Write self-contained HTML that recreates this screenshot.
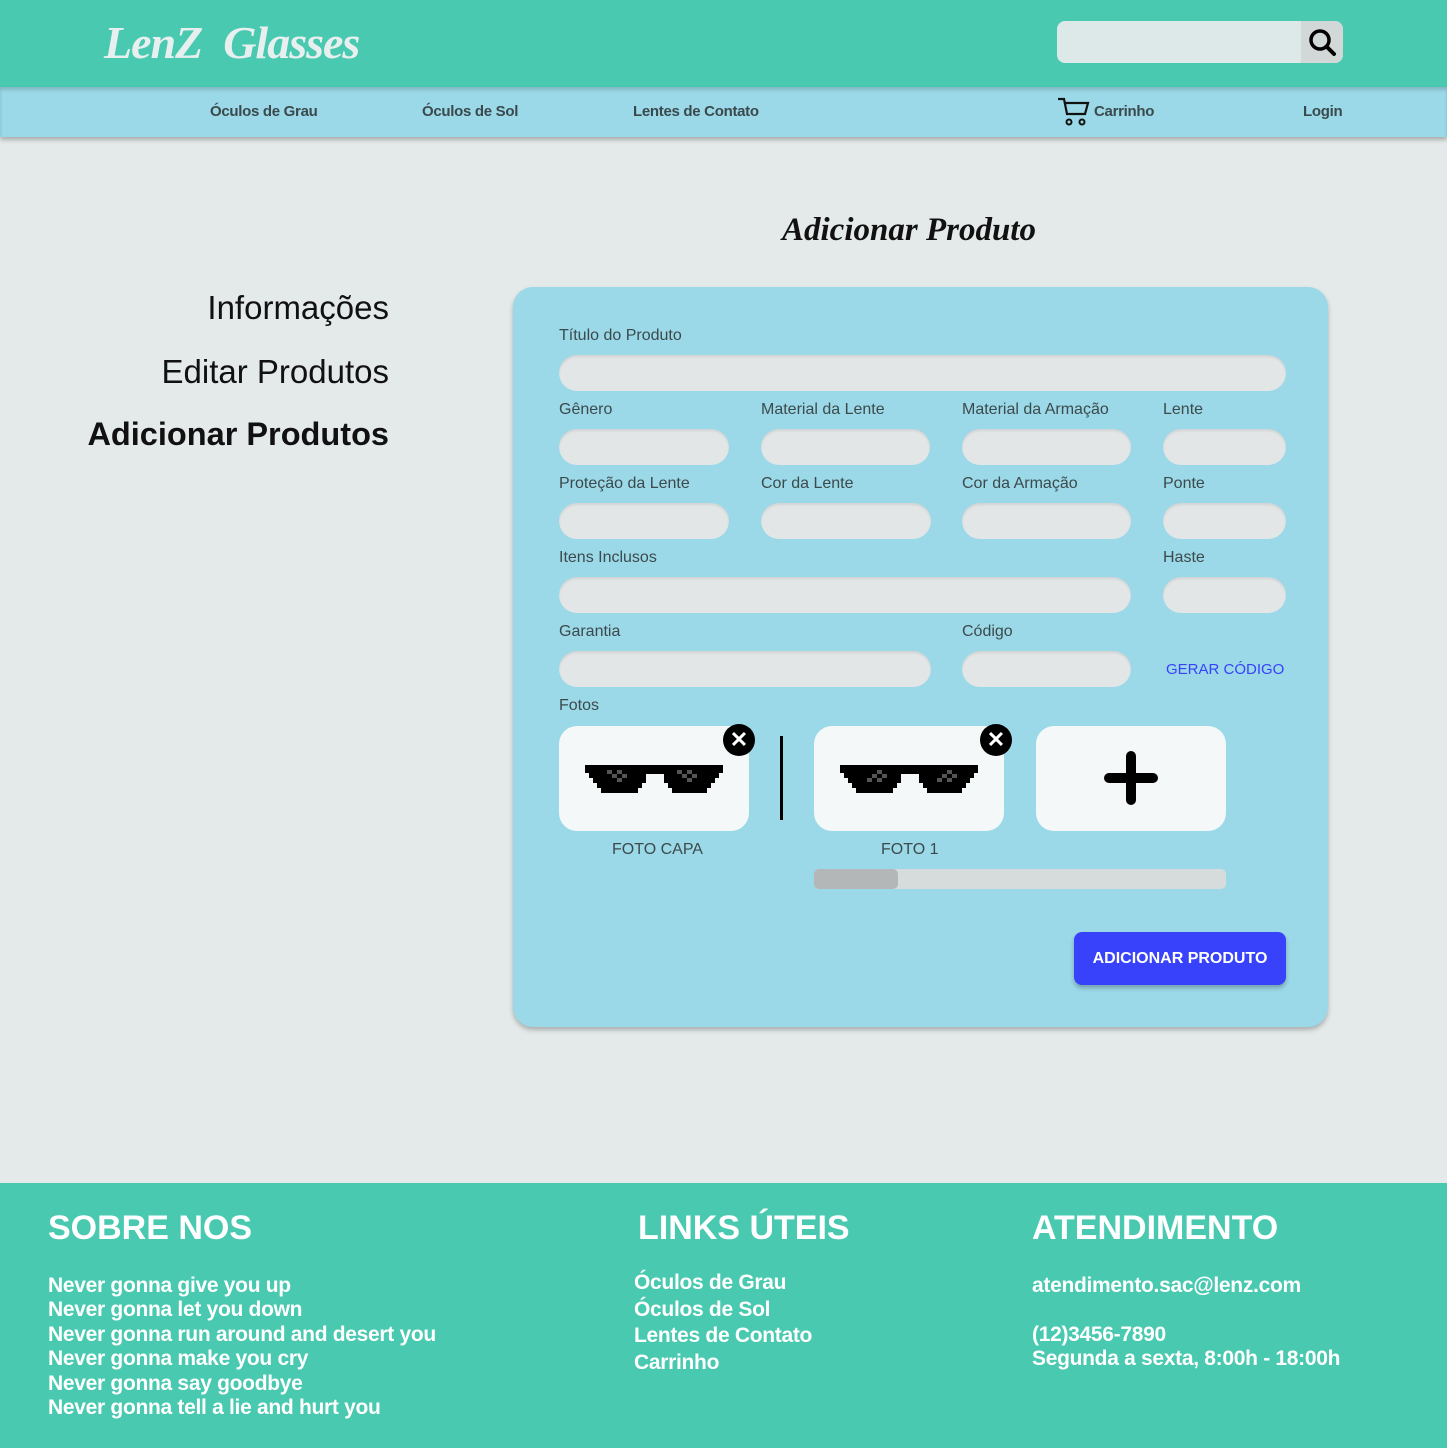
<!DOCTYPE html>
<html><head><meta charset="utf-8"><style>
*{margin:0;padding:0;box-sizing:border-box}
body{width:1447px;height:1448px;background:#e4e9ea;font-family:"Liberation Sans",sans-serif;position:relative;overflow:hidden}
.a{position:absolute;white-space:nowrap}
#hdr{left:0;top:0;width:1447px;height:87px;background:#48c9b0}
#nav{left:0;top:87px;width:1447px;height:50px;background:#9bd8e8;box-shadow:0 3px 4px rgba(0,0,0,.25),inset 0 3px 3px rgba(0,0,0,.15)}
.nl{font-weight:bold;font-size:15px;color:#3a4a4c;top:103px;letter-spacing:-.3px}
.logo{left:104px;top:16px;font-family:"Liberation Serif",serif;font-style:italic;font-weight:bold;font-size:46px;color:#e8efef;letter-spacing:-1px}
.srch{left:1057px;top:21px;width:286px;height:42px;background:#dde8e8;border-radius:8px;overflow:hidden}
.srch div{position:absolute;right:0;top:0;width:42px;height:42px;background:#d2d8d8}
.menu{right:1058px;font-size:33px;color:#111;text-align:right}
#panel{left:513px;top:287px;width:815px;height:740px;background:#9bd8e8;border-radius:20px;box-shadow:0 3px 5px rgba(0,0,0,.25)}
.lb{font-size:16px;color:#3c4a4c}
.in{height:36px;background:#e2e6e6;border-radius:18px;box-shadow:inset 0 2px 2px rgba(0,0,0,.08)}
.ph{width:190px;height:105px;background:#f4f8f9;border-radius:18px}
.x{width:32px;height:32px;border-radius:50%;background:#000;color:#fff;font-weight:bold;font-size:22px;text-align:center;line-height:32px}
#ft{left:0;top:1183px;width:1447px;height:265px;background:#48c9b0;color:#fff}
.fh{font-weight:bold;font-size:34px;top:1209px;color:#fff}
.fl{font-weight:bold;font-size:21px;color:#fff;line-height:24.4px;letter-spacing:-.3px}
</style></head><body>
<div class="a" id="hdr"></div>
<div class="a logo">LenZ&nbsp; Glasses</div>
<div class="a srch"><div><svg width="42" height="42" viewBox="0 0 42 42"><circle cx="19" cy="19" r="9" fill="none" stroke="#000" stroke-width="3.5"/><line x1="25.5" y1="25.5" x2="33" y2="33" stroke="#000" stroke-width="4" stroke-linecap="round"/></svg></div></div>
<div class="a" id="nav"></div>
<div class="a nl" style="left:210px">Óculos de Grau</div>
<div class="a nl" style="left:422px">Óculos de Sol</div>
<div class="a nl" style="left:633px">Lentes de Contato</div>
<svg class="a" style="left:1056px;top:97px" width="34" height="30" viewBox="0 0 34 30"><path d="M2 2h6l3 15h18l3-11H9" fill="none" stroke="#111" stroke-width="2.2"/><circle cx="13" cy="25" r="2.5" fill="none" stroke="#111" stroke-width="2"/><circle cx="26" cy="25" r="2.5" fill="none" stroke="#111" stroke-width="2"/></svg>
<div class="a nl" style="left:1094px">Carrinho</div>
<div class="a nl" style="left:1303px">Login</div>

<div class="a" style="left:782px;top:212px;font-family:'Liberation Serif',serif;font-style:italic;font-weight:bold;font-size:33px;color:#111">Adicionar Produto</div>
<div class="a menu" style="top:289px">Informações</div>
<div class="a menu" style="top:353px">Editar Produtos</div>
<div class="a menu" style="top:416px;font-weight:bold;font-size:32.5px">Adicionar Produtos</div>

<div class="a" id="panel"></div>
<div class="a lb" style="left:559px;top:327px">Título do Produto</div>
<div class="a in" style="left:559px;top:355px;width:727px"></div>

<div class="a lb" style="left:559px;top:401px">Gênero</div>
<div class="a lb" style="left:761px;top:401px">Material da Lente</div>
<div class="a lb" style="left:962px;top:401px">Material da Armação</div>
<div class="a lb" style="left:1163px;top:401px">Lente</div>
<div class="a in" style="left:559px;top:429px;width:170px"></div>
<div class="a in" style="left:761px;top:429px;width:169px"></div>
<div class="a in" style="left:962px;top:429px;width:169px"></div>
<div class="a in" style="left:1163px;top:429px;width:123px"></div>

<div class="a lb" style="left:559px;top:475px">Proteção da Lente</div>
<div class="a lb" style="left:761px;top:475px">Cor da Lente</div>
<div class="a lb" style="left:962px;top:475px">Cor da Armação</div>
<div class="a lb" style="left:1163px;top:475px">Ponte</div>
<div class="a in" style="left:559px;top:503px;width:170px"></div>
<div class="a in" style="left:761px;top:503px;width:170px"></div>
<div class="a in" style="left:962px;top:503px;width:169px"></div>
<div class="a in" style="left:1163px;top:503px;width:123px"></div>

<div class="a lb" style="left:559px;top:549px">Itens Inclusos</div>
<div class="a lb" style="left:1163px;top:549px">Haste</div>
<div class="a in" style="left:559px;top:577px;width:572px"></div>
<div class="a in" style="left:1163px;top:577px;width:123px"></div>

<div class="a lb" style="left:559px;top:623px">Garantia</div>
<div class="a lb" style="left:962px;top:623px">Código</div>
<div class="a in" style="left:559px;top:651px;width:372px"></div>
<div class="a in" style="left:962px;top:651px;width:169px"></div>
<div class="a" style="left:1166px;top:661px;font-size:15px;color:#3742fa">GERAR CÓDIGO</div>

<div class="a lb" style="left:559px;top:697px">Fotos</div>
<div class="a ph" style="left:559px;top:726px"></div>
<div class="a ph" style="left:814px;top:726px"></div>
<div class="a ph" style="left:1036px;top:726px"></div>
<div class="a" style="left:780px;top:736px;width:3px;height:84px;background:#000"></div>
<svg class="a" style="left:585px;top:765px" width="138" height="28" viewBox="0 0 138 28"><path d="M0 0h138v8h-4v5h-4v5h-4v5h-4v5H87v-5h-4v-5h-4V9h-18v9h-4v5h-4v5H16v-5h-4v-5H8v-5H4V8H0z" fill="#000"/><g fill="#555"><rect x="22" y="5" width="5" height="4"/><rect x="32" y="5" width="5" height="4"/><rect x="27" y="9" width="5" height="4"/><rect x="37" y="9" width="5" height="4"/><rect x="32" y="13" width="5" height="4"/><rect x="92" y="5" width="5" height="4"/><rect x="102" y="5" width="5" height="4"/><rect x="97" y="9" width="5" height="4"/><rect x="107" y="9" width="5" height="4"/><rect x="102" y="13" width="5" height="4"/></g></svg>
<svg class="a" style="left:840px;top:765px" width="138" height="28" viewBox="0 0 138 28"><path d="M0 0h138v8h-4v5h-4v5h-4v5h-4v5H87v-5h-4v-5h-4V9h-18v9h-4v5h-4v5H16v-5h-4v-5H8v-5H4V8H0z" fill="#000"/><g fill="#555"><rect x="37" y="5" width="5" height="4"/><rect x="32" y="9" width="5" height="4"/><rect x="42" y="9" width="5" height="4"/><rect x="27" y="13" width="5" height="4"/><rect x="37" y="13" width="5" height="4"/><rect x="107" y="5" width="5" height="4"/><rect x="102" y="9" width="5" height="4"/><rect x="112" y="9" width="5" height="4"/><rect x="97" y="13" width="5" height="4"/><rect x="107" y="13" width="5" height="4"/></g></svg>
<div class="a x" style="left:723px;top:724px">✕</div>
<div class="a x" style="left:980px;top:724px">✕</div>
<svg class="a" style="left:1104px;top:751px" width="54" height="54" viewBox="0 0 54 54"><path d="M27 5v44M5 27h44" stroke="#000" stroke-width="10" stroke-linecap="round"/></svg>
<div class="a lb" style="left:612px;top:841px">FOTO CAPA</div>
<div class="a lb" style="left:881px;top:841px">FOTO 1</div>
<div class="a" style="left:814px;top:869px;width:412px;height:20px;background:#d6dbdc;border-radius:5px"></div>
<div class="a" style="left:814px;top:869px;width:84px;height:20px;background:#b4b7b7;border-radius:5px"></div>
<div class="a" style="left:1074px;top:932px;width:212px;height:53px;background:#3742fa;border-radius:8px;box-shadow:0 3px 4px rgba(0,0,0,.25);color:#fff;font-weight:bold;font-size:16px;text-align:center;line-height:53px">ADICIONAR PRODUTO</div>

<div class="a" id="ft"></div>
<div class="a fh" style="left:48px">SOBRE NOS</div>
<div class="a fh" style="left:638px">LINKS ÚTEIS</div>
<div class="a fh" style="left:1032px">ATENDIMENTO</div>
<div class="a fl" style="left:48px;top:1274px">Never gonna give you up<br>Never gonna let you down<br>Never gonna run around and desert you<br>Never gonna make you cry<br>Never gonna say goodbye<br>Never gonna tell a lie and hurt you</div>
<div class="a fl" style="left:634px;top:1270px;line-height:26.5px">Óculos de Grau<br>Óculos de Sol<br>Lentes de Contato<br>Carrinho</div>
<div class="a fl" style="left:1032px;top:1274px">atendimento.sac@lenz.com<br><br>(12)3456-7890<br>Segunda a sexta, 8:00h - 18:00h</div>
</body></html>
